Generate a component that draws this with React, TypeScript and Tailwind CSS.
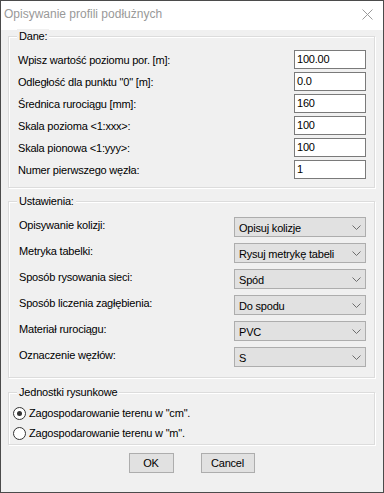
import React from 'react'

const font = { fontFamily: '"Liberation Sans", Arial, sans-serif' }

const daneRows = [
    { label: 'Wpisz wartość poziomu por. [m]:', value: '100.00' },
    { label: 'Odległość dla punktu "0" [m]:', value: '0.0' },
    { label: 'Średnica rurociągu [mm]:', value: '160' },
    { label: 'Skala pozioma <1:xxx>:', value: '100' },
    { label: 'Skala pionowa <1:yyy>:', value: '100' },
    { label: 'Numer pierwszego węzła:', value: '1' },
]

const settingsRows = [
    { label: 'Opisywanie kolizji:', value: 'Opisuj kolizje' },
    { label: 'Metryka tabelki:', value: 'Rysuj metrykę tabeli' },
    { label: 'Sposób rysowania sieci:', value: 'Spód' },
    { label: 'Sposób liczenia zagłębienia:', value: 'Do spodu' },
    { label: 'Materiał rurociągu:', value: 'PVC' },
    { label: 'Oznaczenie węzłów:', value: 'S' },
]

function GroupBox({ title, className, children }: { title: string; className?: string; children: React.ReactNode }) {
    return (
        <div className={`relative border border-[#dcdcdc] shadow-[inset_1px_1px_0_#fff,1px_1px_0_#fff] ${className ?? ''}`}>
            <span className="absolute left-[8px] -top-[8px] bg-[#f0f0f0] px-[2px] leading-[14px]">{title}</span>
            {children}
        </div>
    )
}

function Chevron() {
    return (
        <svg width="9" height="5" viewBox="0 0 9 5" className="block">
            <path d="M0.5 0.5 L4.5 4.5 L8.5 0.5" fill="none" stroke="#6d6d6d" strokeWidth="1" />
        </svg>
    )
}

function Radio({ checked, label }: { checked?: boolean; label: string }) {
    return (
        <div className="flex items-center h-[16px] pl-[4px]">
            <span className="flex items-center justify-center w-[13px] h-[13px] rounded-full border border-[#333] bg-white">
                {checked && <span className="w-[5px] h-[5px] rounded-full bg-[#333]" />}
            </span>
            <span className="ml-[3px] leading-[16px]">{label}</span>
        </div>
    )
}

export default function App() {
    return (
        <div
            className="w-[384px] h-[493px] flex flex-col border border-[#4b4b4b] bg-[#f0f0f0] text-[11px] tracking-[-0.2px] text-black"
            style={font}
        >
            {/* Title bar */}
            <div className="h-[29px] bg-white flex items-start justify-between">
                <span className="pl-[3px] pt-[5px] text-[12px] leading-[16px] tracking-normal text-[#999]">
                    Opisywanie profili podłużnych
                </span>
                <svg width="11" height="11" viewBox="0 0 11 11" className="mt-[8px] mr-[10px]">
                    <path d="M0.5 0.5 L10.5 10.5 M10.5 0.5 L0.5 10.5" stroke="#9a9a9a" strokeWidth="1" />
                </svg>
            </div>

            {/* Body */}
            <div className="flex-1 flex flex-col pl-[7px] pr-[8px] pt-[6px]">
                <GroupBox title="Dane:" className="pt-[13px] pb-[8px]">
                    <div className="flex flex-col gap-[3px]">
                        {daneRows.map((r) => (
                            <div key={r.label} className="flex items-center justify-between pl-[9px] pr-[8px]">
                                <span className="leading-[16px]">{r.label}</span>
                                <div className="w-[72px] h-[19px] border border-[#7a7a7a] bg-white pl-[2px] leading-[17px]">
                                    {r.value}
                                </div>
                            </div>
                        ))}
                    </div>
                </GroupBox>

                <GroupBox title="Ustawienia:" className="mt-[13px] pt-[15px] pb-[10px]">
                    <div className="flex flex-col gap-[6px]">
                        {settingsRows.map((r) => (
                            <div key={r.label} className="flex items-start justify-between pl-[10px] pr-[8px]">
                                <span className="leading-[16px]">{r.label}</span>
                                <div className="w-[132px] h-[20px] border border-[#adadad] bg-[#e1e1e1] flex items-center justify-between pl-[4px] pr-[4px]">
                                    <span className="leading-[18px] pt-[1px]">{r.value}</span>
                                    <Chevron />
                                </div>
                            </div>
                        ))}
                    </div>
                </GroupBox>

                <GroupBox title="Jednostki rysunkowe" className="mt-[14px] pt-[12px] pb-[3px]">
                    <div className="flex flex-col gap-[4px]">
                        <Radio checked label={'Zagospodarowanie terenu w "cm".'} />
                        <Radio label={'Zagospodarowanie terenu w "m".'} />
                    </div>
                </GroupBox>

                <div className="flex justify-center gap-[27px] mt-[8px]">
                    <button className="w-[45px] h-[20px] border border-[#adadad] bg-[#e1e1e1] leading-[18px]">OK</button>
                    <button className="w-[54px] h-[20px] border border-[#adadad] bg-[#e1e1e1] leading-[18px]">Cancel</button>
                </div>
            </div>
        </div>
    )
}
